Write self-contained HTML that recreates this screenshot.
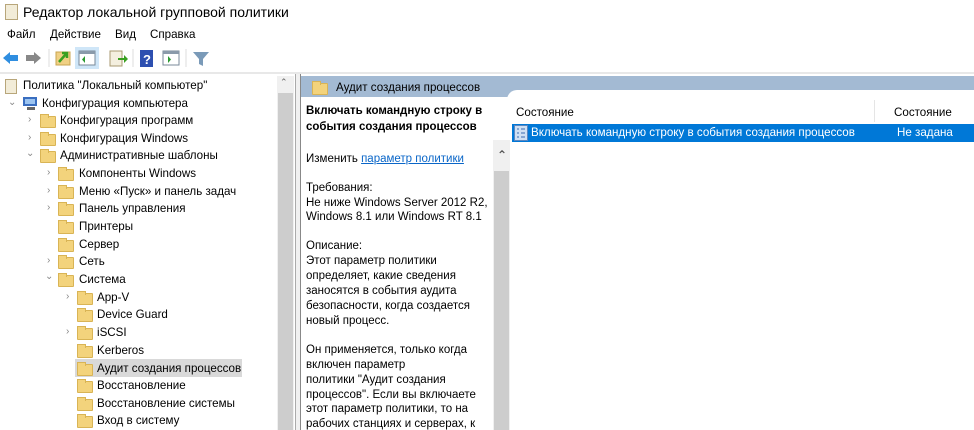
<!DOCTYPE html>
<html><head><meta charset="utf-8"><style>
*{margin:0;padding:0;box-sizing:border-box}
body{width:974px;height:430px;overflow:hidden;background:#fff;font-family:"Liberation Sans","DejaVu Sans",sans-serif;font-size:11.6px;color:#000;position:relative}
.a{position:absolute;white-space:nowrap}
.fold{position:absolute;width:16px;height:12px;background:#f3d37c;border:1px solid #d9b455;border-radius:1px}
.fold:before{content:"";position:absolute;left:-1px;top:-3px;width:7px;height:3px;background:#f3d37c;border:1px solid #d9b455;border-bottom:none}
.chev{position:absolute;font-size:10px;color:#888}
.d{position:absolute;left:306px;white-space:nowrap;font-size:11.5px}
</style></head><body>
<!-- title -->
<div class="a" style="left:5px;top:4px;width:13px;height:16px;background:#f2ecd8;border:1px solid #b8a67a"></div>
<div class="a" style="left:23px;top:4px;font-size:14px">Редактор локальной групповой политики</div>
<!-- menu -->
<div class="a" style="left:7px;top:28px">Файл</div>
<div class="a" style="left:50px;top:28px">Действие</div>
<div class="a" style="left:115px;top:28px">Вид</div>
<div class="a" style="left:150px;top:28px">Справка</div>
<!-- toolbar -->
<svg class="a" style="left:0;top:46px" width="220" height="24">
<path d="M3 12 L10 6 L10 9 L18 9 L18 15 L10 15 L10 18 Z" fill="#2f8ee0"/>
<path d="M41 12 L34 6 L34 9 L26 9 L26 15 L34 15 L34 18 Z" fill="#888"/>
<line x1="49" y1="3" x2="49" y2="21" stroke="#ddd"/>
<rect x="56" y="6" width="14" height="13" fill="#f0d084" stroke="#c9a550"/>
<path d="M59 16 L66 8 M62 7 L67 7 L67 12" stroke="#3aa020" stroke-width="2.5" fill="none"/>
<rect x="75" y="1" width="24" height="22" fill="#cfe6f8"/>
<rect x="79" y="5" width="16" height="14" fill="#fff" stroke="#7a8a9a"/>
<rect x="79" y="5" width="16" height="3" fill="#8a9aaa"/>
<path d="M85 10 L85 17 L82 13.5Z" fill="#2a9a30"/>
<rect x="110" y="5" width="12" height="15" fill="#f4efdf" stroke="#a89a70"/>
<path d="M118 12 L124 12 L124 9 L128 13 L124 17 L124 14 L118 14Z" fill="#3aa020"/>
<line x1="133" y1="3" x2="133" y2="21" stroke="#ddd"/>
<rect x="140" y="4" width="13" height="17" fill="#2d4fb0"/>
<text x="143" y="18" fill="#fff" font-size="13" font-weight="bold" font-family="Liberation Sans">?</text>
<rect x="163" y="5" width="16" height="14" fill="#fff" stroke="#7a8a9a"/>
<rect x="163" y="5" width="16" height="3" fill="#8a9aaa"/>
<path d="M168 10 L168 17 L171 13.5Z" fill="#2a9a30"/>
<line x1="186" y1="3" x2="186" y2="21" stroke="#ddd"/>
<path d="M193 6 L209 6 L203 13 L203 20 L199 18 L199 13Z" fill="#7a9ab8"/>
</svg>
<div class="a" style="left:0;top:72px;width:974px;height:2px;background:#e8e8e8"></div>
<!-- tree -->
<div class="a" style="left:0;top:74px;width:296px;height:356px;border-right:1px solid #aaa"></div>
<div class="a" style="left:277px;top:76px;width:17px;height:354px;background:#f0f0f0"></div>
<div class="a" style="left:280px;top:77px;font-size:9px;color:#666">&#8963;</div>
<div class="a" style="left:278px;top:93px;width:15px;height:337px;background:#cdcdcd"></div>
<div class="a" style="left:296px;top:74px;width:4px;height:356px;background:#f0f0f0"></div>

<div class="a" style="left:5px;top:79px;width:12px;height:15px;background:#f2ecd8;border:1px solid #b8a67a"></div>
<div class="a" style="left:23px;top:79px">Политика "Локальный компьютер"</div>
<div class="chev" style="left:8px;top:97px">&#8964;</div>
<svg class="a" style="left:22px;top:96px" width="17" height="15"><rect x="1" y="1" width="14" height="9" fill="#3a6ec0"/><rect x="3" y="3" width="10" height="5" fill="#9cc4f0"/><rect x="5" y="11" width="8" height="3" fill="#666"/></svg>
<div class="a" style="left:42px;top:97px">Конфигурация компьютера</div>

<div class="chev" style="left:28px;top:114px">&#8250;</div><div class="fold" style="left:40px;top:116px"></div><div class="a" style="left:60px;top:114px">Конфигурация программ</div>
<div class="chev" style="left:28px;top:132px">&#8250;</div><div class="fold" style="left:40px;top:134px"></div><div class="a" style="left:60px;top:132px">Конфигурация Windows</div>
<div class="chev" style="left:26px;top:148px">&#8964;</div><div class="fold" style="left:40px;top:151px"></div><div class="a" style="left:60px;top:149px">Административные шаблоны</div>
<div class="chev" style="left:47px;top:167px">&#8250;</div><div class="fold" style="left:58px;top:169px"></div><div class="a" style="left:79px;top:167px">Компоненты Windows</div>
<div class="chev" style="left:47px;top:185px">&#8250;</div><div class="fold" style="left:58px;top:187px"></div><div class="a" style="left:79px;top:185px">Меню «Пуск» и панель задач</div>
<div class="chev" style="left:47px;top:202px">&#8250;</div><div class="fold" style="left:58px;top:204px"></div><div class="a" style="left:79px;top:202px">Панель управления</div>
<div class="fold" style="left:58px;top:222px"></div><div class="a" style="left:79px;top:220px">Принтеры</div>
<div class="fold" style="left:58px;top:240px"></div><div class="a" style="left:79px;top:238px">Сервер</div>
<div class="chev" style="left:47px;top:255px">&#8250;</div><div class="fold" style="left:58px;top:257px"></div><div class="a" style="left:79px;top:255px">Сеть</div>
<div class="chev" style="left:45px;top:271px">&#8964;</div><div class="fold" style="left:58px;top:275px"></div><div class="a" style="left:79px;top:273px">Система</div>
<div class="chev" style="left:66px;top:291px">&#8250;</div><div class="fold" style="left:77px;top:293px"></div><div class="a" style="left:97px;top:291px">App-V</div>
<div class="fold" style="left:77px;top:310px"></div><div class="a" style="left:97px;top:308px">Device Guard</div>
<div class="chev" style="left:66px;top:326px">&#8250;</div><div class="fold" style="left:77px;top:328px"></div><div class="a" style="left:97px;top:326px">iSCSI</div>
<div class="fold" style="left:77px;top:346px"></div><div class="a" style="left:97px;top:344px">Kerberos</div>
<div class="a" style="left:75px;top:359px;width:167px;height:18px;background:#d9d9d9"></div>
<div class="fold" style="left:77px;top:364px"></div><div class="a" style="left:97px;top:362px">Аудит создания процессов</div>
<div class="fold" style="left:77px;top:381px"></div><div class="a" style="left:97px;top:379px">Восстановление</div>
<div class="fold" style="left:77px;top:399px"></div><div class="a" style="left:97px;top:397px">Восстановление системы</div>
<div class="fold" style="left:77px;top:416px"></div><div class="a" style="left:97px;top:414px">Вход в систему</div>

<!-- right pane -->
<div class="a" style="left:300px;top:74px;width:674px;height:356px;border-left:1px solid #888"></div>
<div class="a" style="left:301px;top:76px;width:673px;height:21px;background:#a3bad3"></div>
<div class="a" style="left:507px;top:90px;width:467px;height:10px;background:#fff;border-top-left-radius:10px"></div>
<div class="fold" style="left:312px;top:83px"></div>
<div class="a" style="left:336px;top:81px">Аудит создания процессов</div>

<div class="d" style="top:105px;font-weight:bold">Включать командную строку в</div>
<div class="d" style="top:121px;font-weight:bold">события создания процессов</div>
<div class="d" style="top:153px">Изменить <span style="color:#0a66c8;text-decoration:underline">параметр политики</span></div>
<div class="d" style="top:182px">Требования:</div>
<div class="d" style="top:197px">Не ниже Windows Server 2012 R2,</div>
<div class="d" style="top:211px">Windows 8.1 или Windows RT 8.1</div>
<div class="d" style="top:240px">Описание:</div>
<div class="d" style="top:255px">Этот параметр политики</div>
<div class="d" style="top:270px">определяет, какие сведения</div>
<div class="d" style="top:285px">заносятся в события аудита</div>
<div class="d" style="top:300px">безопасности, когда создается</div>
<div class="d" style="top:315px">новый процесс.</div>
<div class="d" style="top:344px">Он применяется, только когда</div>
<div class="d" style="top:359px">включен параметр</div>
<div class="d" style="top:374px">политики "Аудит создания</div>
<div class="d" style="top:389px">процессов". Если вы включаете</div>
<div class="d" style="top:403px">этот параметр политики, то на</div>
<div class="d" style="top:418px">рабочих станциях и серверах, к</div>

<div class="a" style="left:493px;top:140px;width:17px;height:290px;background:#f0f0f0"></div>
<div class="a" style="left:497px;top:148px;font-size:12px;color:#555;font-weight:bold">&#8963;</div>
<div class="a" style="left:494px;top:171px;width:15px;height:259px;background:#cdcdcd"></div>

<div class="a" style="left:516px;top:106px">Состояние</div>
<div class="a" style="left:874px;top:100px;width:1px;height:22px;background:#e5e5e5"></div>
<div class="a" style="left:894px;top:106px">Состояние</div>
<div class="a" style="left:512px;top:124px;width:462px;height:18px;background:#0078d7"></div>
<svg class="a" style="left:514px;top:125px" width="14" height="16"><rect x="0.5" y="0.5" width="13" height="15" fill="#cfe0f4" stroke="#5a86c0"/><path d="M3 4h2M7 4h4M3 8h2M7 8h4M3 12h2M7 12h4" stroke="#3a6ab0"/></svg>
<div class="a" style="left:531px;top:126px;color:#fff">Включать командную строку в события создания процессов</div>
<div class="a" style="left:897px;top:126px;color:#fff">Не задана</div>
</body></html>
